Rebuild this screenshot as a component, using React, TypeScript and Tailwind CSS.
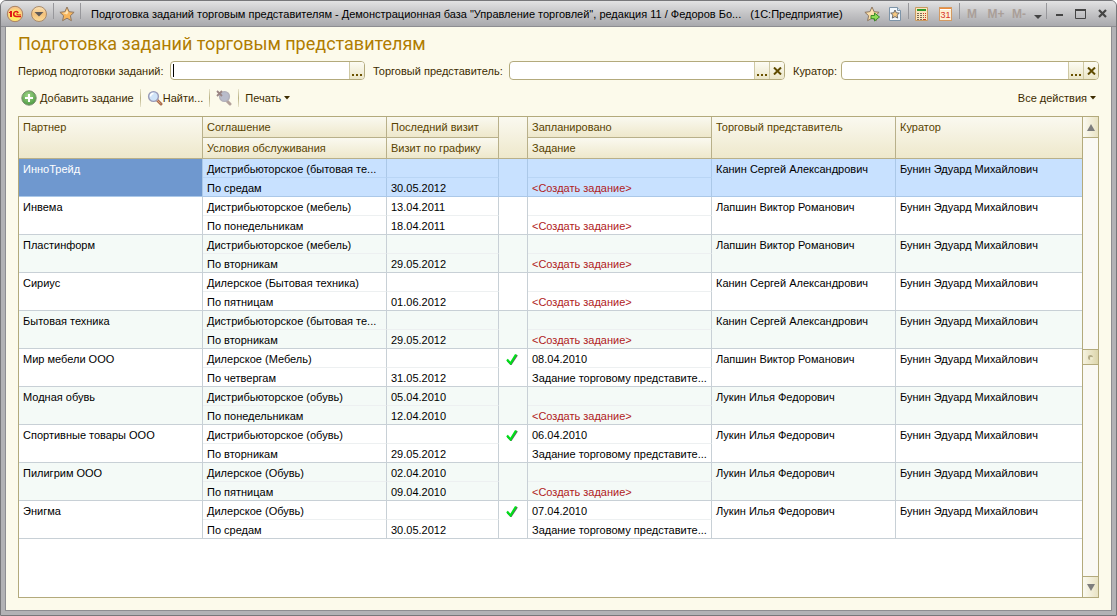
import React from "react";

type Row = {
  partner: string;
  agreement: string;
  terms: string;
  lastVisit: string;
  nextVisit: string;
  planned: string;
  rep: string;
};

const KANIN = "Канин Сергей Александрович";
const LAPSHIN = "Лапшин Виктор Романович";
const LUKIN = "Лукин Илья Федорович";
const CURATOR = "Бунин Эдуард Михайлович";

const rows: Row[] = [
  { partner: "ИнноТрейд", agreement: "Дистрибьюторское (бытовая те...", terms: "По средам", lastVisit: "", nextVisit: "30.05.2012", planned: "", rep: KANIN },
  { partner: "Инвема", agreement: "Дистрибьюторское (мебель)", terms: "По понедельникам", lastVisit: "13.04.2011", nextVisit: "18.04.2011", planned: "", rep: LAPSHIN },
  { partner: "Пластинформ", agreement: "Дистрибьюторское (мебель)", terms: "По вторникам", lastVisit: "", nextVisit: "29.05.2012", planned: "", rep: LAPSHIN },
  { partner: "Сириус", agreement: "Дилерское (Бытовая техника)", terms: "По пятницам", lastVisit: "", nextVisit: "01.06.2012", planned: "", rep: KANIN },
  { partner: "Бытовая техника", agreement: "Дистрибьюторское (бытовая те...", terms: "По вторникам", lastVisit: "", nextVisit: "29.05.2012", planned: "", rep: KANIN },
  { partner: "Мир мебели ООО", agreement: "Дилерское (Мебель)", terms: "По четвергам", lastVisit: "", nextVisit: "31.05.2012", planned: "08.04.2010", rep: LAPSHIN },
  { partner: "Модная обувь", agreement: "Дистрибьюторское (обувь)", terms: "По понедельникам", lastVisit: "05.04.2010", nextVisit: "12.04.2010", planned: "", rep: LUKIN },
  { partner: "Спортивные товары ООО", agreement: "Дистрибьюторское (обувь)", terms: "По вторникам", lastVisit: "", nextVisit: "29.05.2012", planned: "06.04.2010", rep: LUKIN },
  { partner: "Пилигрим ООО", agreement: "Дилерское (Обувь)", terms: "По пятницам", lastVisit: "02.04.2010", nextVisit: "09.04.2010", planned: "", rep: LUKIN },
  { partner: "Энигма", agreement: "Дилерское (Обувь)", terms: "По средам", lastVisit: "", nextVisit: "30.05.2012", planned: "07.04.2010", rep: LUKIN },
];

const STAR = "M8 1l2.1 4.7 5 .6-3.7 3.4 1 5L8 12.200l-4.400 2.500 1-5L.9 6.300l5-.6z";

function LogoIcon() {
  return (
    <svg width="18" height="18" viewBox="0 0 18 18">
      <defs>
        <radialGradient id="logo" cx="50%" cy="60%" r="50%">
          <stop offset="0" stopColor="#fff04a" />
          <stop offset="0.600" stopColor="#ffe66a" />
          <stop offset="1" stopColor="#f7c48a" />
        </radialGradient>
      </defs>
      <circle cx="9" cy="9" r="7.700" fill="url(#logo)" stroke="#a98263" />
      <path d="M3 7h1V6h2v6H4V8H3z" fill="#e0141a" />
      <path d="M12.200 8C11.500 6 7.700 6 7.700 9c0 1.800 1.200 2.500 2.600 2.500H15" fill="none" stroke="#e0141a" strokeWidth="1.500" />
      <path d="M10 9h1.500v.8H15" fill="none" stroke="#e0141a" strokeWidth=".8" />
    </svg>
  );
}

function MenuBallIcon() {
  return (
    <svg width="18" height="18" viewBox="0 0 18 18">
      <defs>
        <linearGradient id="ball" x1="0" y1="0" x2="0" y2="1">
          <stop offset="0" stopColor="#fbe3b8" />
          <stop offset="0.500" stopColor="#f3c27c" />
          <stop offset="1" stopColor="#fbdc9a" />
        </linearGradient>
      </defs>
      <circle cx="9" cy="9" r="7.500" fill="url(#ball)" stroke="#a98a6b" />
      <path d="M4.500 7h9L9 11.500z" fill="#5f5a58" />
    </svg>
  );
}

function StarIcon({ arrow = false }: { arrow?: boolean }) {
  return (
    <svg width="16" height="16" viewBox="0 0 16 16">
      <path d={STAR} fill={arrow ? "#f9dca4" : "#f7b55c"} stroke="#8d7763" strokeWidth="1" />
      <path d="M8 3.200l1.300 3.400L8 8.500 3.500 7l3-.5z" fill="#fde3b5" />
      {arrow && <path d="M7 9.500h3.500V7L15.500 11l-5 4v-2.300H7z" fill="#8fdc55" stroke="#2f8323" strokeWidth=".9" />}
    </svg>
  );
}

function PageStarIcon() {
  return (
    <svg width="14" height="16" viewBox="0 0 14 16">
      <path d="M1.500 1.500h8l3 3v10h-11z" fill="#f2f8fd" stroke="#7d94a8" />
      <path d="M9.500 1.500v3h3" fill="#d5e4f0" stroke="#7d94a8" />
      <path d="M7 4l1.300 2.800 3 .3-2.200 2 .6 3L7 10.600l-2.700 1.500.6-3-2.200-2 3-.3z" fill="#f6c983" stroke="#5e5f63" strokeWidth=".9" />
    </svg>
  );
}

function CalcIcon() {
  return (
    <svg width="14" height="16" viewBox="0 0 14 16">
      <path d="M.5 1.500h12v13H.5z" fill="#fbe6bd" stroke="#c99a61" />
      <path d="M2 3h9v2H2z" fill="#2f9a2c" />
      <path d="M2 7h2v1H2zM5 7h2v1H5zM2 9h2v1H2zM5 9h2v1H5zM2 11h2v1H2zM5 11h2v1H5zM8 9h1v1H8zM8 11h1v1H8zM2 13h2v1H2zM5 13h2v1H5z" fill="#7b6a58" />
      <path d="M8 7h1v1H8zM10 7h1v1h-1zM10 9h1v1h-1zM10 11h1v1h-1zM8 13h3v1H8z" fill="#cf3a24" />
    </svg>
  );
}

function CalendarIcon() {
  return (
    <span className="flex h-[14px] w-[13px] flex-col border border-[#d39a62] bg-[#fdf0d4]">
      <span className="h-[3px] border-b border-white bg-[#ee8b3c]" />
      <span className="text-center text-[9px] leading-[10px] text-[#d8352a]">31</span>
    </span>
  );
}

function AddIcon() {
  return (
    <svg width="16" height="16" viewBox="0 0 16 16">
      <defs>
        <radialGradient id="add" cx="45%" cy="35%" r="65%">
          <stop offset="0" stopColor="#a6d98c" />
          <stop offset="1" stopColor="#4b9a41" />
        </radialGradient>
      </defs>
      <circle cx="8" cy="8" r="7.200" fill="url(#add)" stroke="#7c8f72" />
      <path d="M7 4h2v3h3v2H9v3H7V9H4V7h3z" fill="#fff" />
    </svg>
  );
}

function LensIcon({ off = false }: { off?: boolean }) {
  return (
    <svg width="16" height="16" viewBox="0 0 16 16">
      <path d="M10 10l4 4" stroke={off ? "#b3a19b" : "#a96d4e"} strokeWidth="3" strokeLinecap="round" />
      {!off && <path d="M10 10l3.500 3.500" stroke="#e2a07c" strokeWidth="1" />}
      <circle cx={off ? 8.500 : 6.500} cy="6.500" r="4.900" fill={off ? "#b9bccb" : "#cfe3f8"} stroke={off ? "#b3b1bb" : "#9a9bb8"} strokeWidth="1.400" />
      {!off && <path d="M3.500 6.500a3 3 0 013-3" fill="none" stroke="#fff" strokeWidth="1.500" />}
      {off && <path d="M1 1l5 5M6 1L1 6" stroke="#9a8484" strokeWidth="1.800" />}
    </svg>
  );
}

function CheckIcon() {
  return (
    <svg width="12" height="12" viewBox="0 0 12 12" role="img" aria-label="Запланировано" className="ml-[3px]">
      <path d="M1.500 7.500L5 11l6-9" fill="none" stroke="#5d6b5d" strokeWidth="2" />
      <path d="M1 6.500l3.500 4L10 1.500" fill="none" stroke="#00e01a" strokeWidth="2.200" />
    </svg>
  );
}

function Caret() {
  return (
    <svg width="6" height="4" viewBox="0 0 6 4">
      <path d="M0 0h6L3 3.500z" fill="#3d2c00" />
    </svg>
  );
}

function TitleDivider() {
  return <span className="mt-0.5 h-4 w-px shrink-0 self-start bg-[#97979b]" />;
}

function ToolDivider() {
  return <span className="h-[18px] w-px shrink-0 bg-linear-to-b from-[#e8e4cc] via-[#b9b183] to-[#e8e4cc]" />;
}

function TitleBar() {
  return (
    <header className="flex h-[26px] items-center border-b border-[#8d8d91] bg-linear-to-b from-[#e2e2e3] via-[#c4c4c6] to-[#a9a9ad] pr-[3px] pl-[5px] text-black">
      <button aria-label="Главное меню" className="mr-1.5"><LogoIcon /></button>
      <button aria-label="Меню" className="mr-[5px]"><MenuBallIcon /></button>
      <TitleDivider />
      <button aria-label="Избранное" className="mx-[5px]"><StarIcon /></button>
      <TitleDivider />
      <p className="ml-2.5 min-w-0 flex-1 truncate whitespace-pre">
        {'Подготовка заданий торговым представителям - Демонстрационная база "Управление торговлей", редакция 11 / Федоров Бо...   (1С:Предприятие)'}
      </p>
      <div className="flex h-full shrink-0 items-center">
        <button aria-label="Добавить в избранное" className="w-6"><StarIcon arrow /></button>
        <button aria-label="Открыть избранное" className="w-5"><PageStarIcon /></button>
        <TitleDivider />
        <button aria-label="Калькулятор" className="ml-1.5 w-6"><CalcIcon /></button>
        <button aria-label="Календарь" className="w-5"><CalendarIcon /></button>
        <TitleDivider />
        <button disabled className="w-6 text-center text-[12px] font-bold text-[#aa9f99]">M</button>
        <button disabled className="w-6 text-center text-[12px] font-bold text-[#aa9f99]">M+</button>
        <button disabled className="w-[22px] text-center text-[12px] font-bold text-[#aa9f99]">M-</button>
        <button aria-label="Ещё" className="mt-1.5 mr-1 ml-1">
          <svg width="8" height="4" viewBox="0 0 8 4"><path d="M0 0h8L4 4z" fill="#444" /></svg>
        </button>
        <TitleDivider />
        <button aria-label="Свернуть" className="w-[22px] pt-1 pl-[9px]">
          <svg width="8" height="3" viewBox="0 0 8 3"><path d="M0 0h7v2H0z" fill="#444" /></svg>
        </button>
        <button aria-label="Развернуть" className="w-6 pl-1.5">
          <svg width="11" height="10" viewBox="0 0 11 10"><path d="M.5 1h10v8.500H.5z" fill="none" stroke="#444" /><path d="M0 0h11v2H0z" fill="#444" /></svg>
        </button>
        <button aria-label="Закрыть" className="w-5 px-[5px]">
          <svg width="9" height="9" viewBox="0 0 9 9"><path d="M1 1l7 7M8 1L1 8" stroke="#444" strokeWidth="2.200" /></svg>
        </button>
      </div>
    </header>
  );
}

function Field({ id, clearable = false, focus = false }: { id: string; clearable?: boolean; focus?: boolean }) {
  const btn = "flex w-[15px] shrink-0 justify-center border-l border-[#cfc9a4] bg-linear-to-b from-[#fdfcf3] to-[#ebe6c9]";
  return (
    <div className="flex h-[19px] min-w-0 overflow-hidden rounded-[4px] border border-[#b3aa7c] bg-white">
      {focus && <span className="ml-0.5 h-[13px] w-px shrink-0 self-center bg-black" />}
      <input id={id} className="min-w-0 flex-1 px-0.5 text-black outline-none" />
      <button aria-label="Выбрать" className={btn + " items-end pb-[3px]"}>
        <svg width="10" height="2" viewBox="0 0 10 2"><path d="M0 0h2v2H0zM4 0h2v2H4zM8 0h2v2H8z" fill="#6b5200" /></svg>
      </button>
      {clearable && (
        <button aria-label="Очистить" className={btn + " items-center"}>
          <svg width="9" height="8" viewBox="0 0 9 8"><path d="M1 .5l7 7M8 .5l-7 7" stroke="#5f4b00" strokeWidth="2" /></svg>
        </button>
      )}
    </div>
  );
}

const TH = "border-r border-b border-[#b8b08a] px-1 pt-[2px] text-left align-top font-normal bg-linear-to-b from-[#faf9f0] to-[#eee8cb] truncate";

function DataTable() {
  return (
    <table className="w-full table-fixed border-separate border-spacing-0 leading-[16px] text-black">
      <colgroup>
        <col className="w-[184px]" />
        <col className="w-[184px]" />
        <col className="w-[112px]" />
        <col className="w-[29px]" />
        <col className="w-[184px]" />
        <col className="w-[184px]" />
        <col />
      </colgroup>
      <thead className="text-[#594300]">
        <tr className="h-[21px]">
          <th rowSpan={2} className={TH}>Партнер</th>
          <th className={TH}>Соглашение</th>
          <th className={TH}>Последний визит</th>
          <th rowSpan={2} className={TH} aria-label="Статус" />
          <th className={TH}>Запланировано</th>
          <th rowSpan={2} className={TH}>Торговый представитель</th>
          <th rowSpan={2} className={TH + " border-r-0"}>Куратор</th>
        </tr>
        <tr className="h-[21px]">
          <th className={TH}>Условия обслуживания</th>
          <th className={TH}>Визит по графику</th>
          <th className={TH}>Задание</th>
        </tr>
      </thead>
      {rows.map((r, i) => {
        const selected = i === 0;
        const bg = selected ? "bg-[#c8e1ff]" : i % 2 === 0 ? "bg-[#f4faf7]" : "bg-white";
        const line = selected ? "border-[#abc8e8]" : "border-[#c8d0d6]";
        const cell = "border-r border-b px-1 pt-[2px] align-top truncate ";
        const full = cell + line;
        const top = cell + (selected ? "border-r-[#abc8e8] border-b-[#b9d5f5]" : "border-r-[#c8d0d6] border-b-[#edf0f1]");
        return (
          <tbody key={r.partner} className={bg}>
            <tr className="h-[19px]">
              <td rowSpan={2} className={full + (selected ? " bg-[#6f98cf] text-white" : "")}>{r.partner}</td>
              <td className={top}>{r.agreement}</td>
              <td className={top}>{r.lastVisit}</td>
              <td rowSpan={2} className={"border-r border-b px-1 pt-1 align-top " + line}>{r.planned && <CheckIcon />}</td>
              <td className={top}>{r.planned}</td>
              <td rowSpan={2} className={full}>{r.rep}</td>
              <td rowSpan={2} className={full + " border-r-0"}>{CURATOR}</td>
            </tr>
            <tr className="h-[19px]">
              <td className={full}>{r.terms}</td>
              <td className={full}>{r.nextVisit}</td>
              <td className={full + (r.planned ? "" : " text-[#b01c1c]")}>
                {r.planned ? "Задание торговому представите..." : "<Создать задание>"}
              </td>
            </tr>
          </tbody>
        );
      })}
    </table>
  );
}

function ScrollBar() {
  const btn = "flex h-[21px] shrink-0 items-center justify-center border-[#b3aa7c] bg-linear-to-r from-[#fbfaf1] to-[#e9e3c4]";
  return (
    <div className="flex w-4 shrink-0 flex-col border-l border-[#b3aa7c] bg-[#faf9f4]">
      <button aria-label="Вверх" className={btn + " border-b"}>
        <svg width="8" height="7" viewBox="0 0 8 7"><path d="M4 0l4 7H0z" fill="#7d7d7d" /></svg>
      </button>
      <div className="flex-1" />
      <div className="flex h-4 items-center justify-center border-y border-[#b3aa7c] bg-linear-to-r from-[#f6f3e0] to-[#ddd6ac]">
        <span className="size-[5px] rounded-full border-t-2 border-l-2 border-[#b3ab86] bg-[#efeccf]" />
      </div>
      <div className="flex-1" />
      <button aria-label="Вниз" className={btn + " border-t"}>
        <svg width="8" height="7" viewBox="0 0 8 7"><path d="M0 0h8L4 7z" fill="#7d7d7d" /></svg>
      </button>
    </div>
  );
}

export default function App() {
  return (
    <div className="flex min-h-screen flex-col overflow-hidden rounded-t-[6px] border border-[#77777a] bg-[#b2b2b5] font-['Liberation_Sans',Arial,sans-serif] text-[11px] leading-[16px] text-[#3d2c00]">
      <TitleBar />
      <main className="mx-1 mb-1 flex flex-1 flex-col border-x border-b border-[#8d8d91] bg-[#fcfaeb] px-3 pt-[5px] pb-3">
        <h1 className="font-['Roboto','Liberation_Sans',sans-serif] text-[18px] leading-6 text-[#b07c00]">Подготовка заданий торговым представителям</h1>
        <form className="mt-[5px] grid grid-cols-[152px_195fr_144px_276fr_56px_258fr] items-center whitespace-nowrap">
          <label htmlFor="period">Период подготовки заданий:</label>
          <Field id="period" focus />
          <label htmlFor="rep" className="pl-2">Торговый представитель:</label>
          <Field id="rep" clearable />
          <label htmlFor="curator" className="pl-2">Куратор:</label>
          <Field id="curator" clearable />
        </form>
        <div className="mt-2 flex h-[20px] items-center gap-1.5 pl-[3px]">
          <button className="flex items-center gap-[3px]"><AddIcon />Добавить задание</button>
          <ToolDivider />
          <button className="flex items-center"><LensIcon />Найти...</button>
          <ToolDivider />
          <button disabled aria-label="Отменить поиск"><LensIcon off /></button>
          <ToolDivider />
          <button className="flex items-center gap-[3px]">Печать<Caret /></button>
          <button className="ml-auto flex items-center gap-[3px] pr-[3px]">Все действия<Caret /></button>
        </div>
        <section className="mt-2 flex flex-1 border border-[#b3aa7c] bg-white">
          <div className="min-w-0 flex-1"><DataTable /></div>
          <ScrollBar />
        </section>
      </main>
    </div>
  );
}
